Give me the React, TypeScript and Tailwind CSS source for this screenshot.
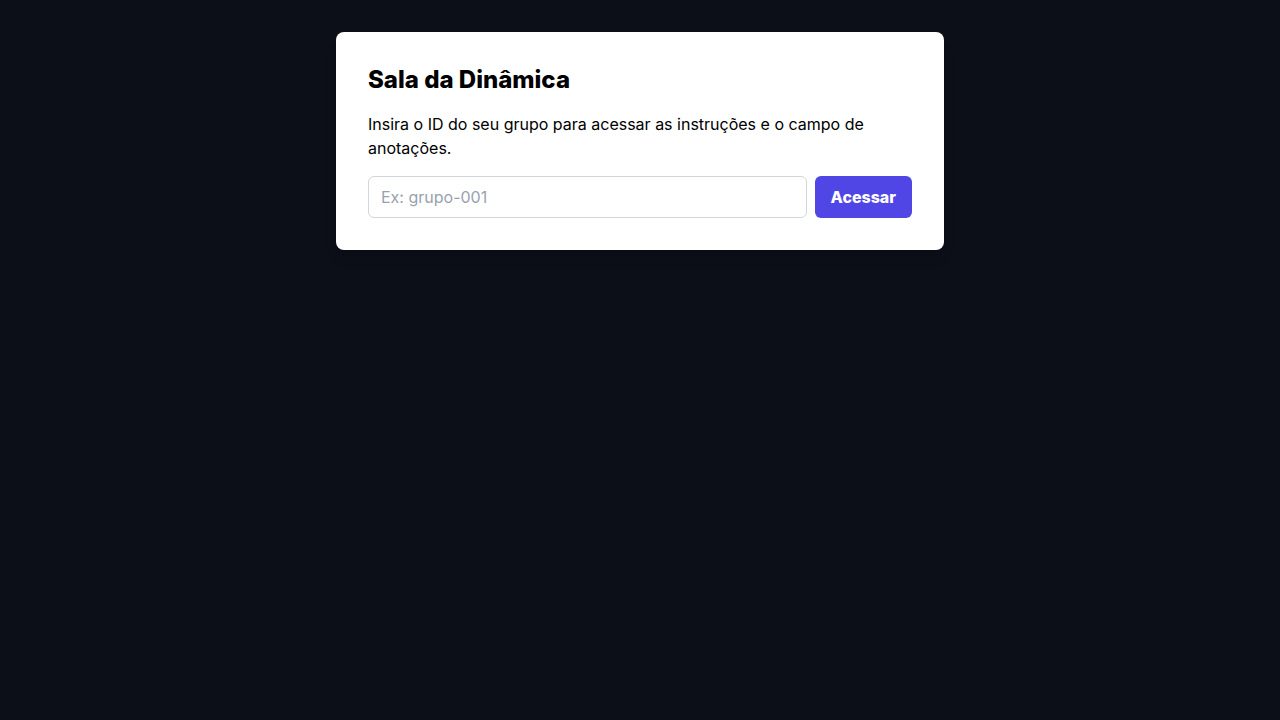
import React from "react";

const App = () => {
  return (
    <div
      className="min-h-screen w-full bg-[#0c0f18] px-4 py-8"
      style={{ fontFamily: "Inter, 'Noto Sans', sans-serif" }}
    >
      <div className="mx-auto w-[608px] rounded-lg bg-white p-8 shadow-lg">
        <h1 className="text-2xl font-extrabold text-black">Sala da Dinâmica</h1>
        <p className="mt-4 text-base leading-6 text-black">
          Insira o ID do seu grupo para acessar as instruções e o campo de
          anotações.
        </p>
        <div className="mt-4 flex gap-2">
          <input
            type="text"
            placeholder="Ex: grupo-001"
            className="h-[42px] flex-1 rounded-md border border-gray-300 px-3 text-base text-black placeholder:text-gray-400 outline-none"
          />
          <button className="h-[42px] rounded-md bg-[#4f46e5] px-4 text-base font-extrabold text-white">
            Acessar
          </button>
        </div>
      </div>
    </div>
  );
};

export default App;
